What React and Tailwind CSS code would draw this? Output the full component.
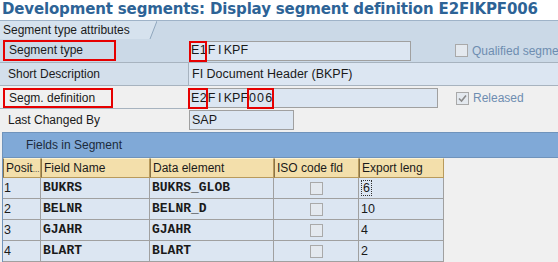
import React from "react";

const rows = [
  ["1", "BUKRS", "BUKRS_GLOB", "6"],
  ["2", "BELNR", "BELNR_D", "10"],
  ["3", "GJAHR", "GJAHR", "4"],
  ["4", "BLART", "BLART", "2"],
];

function Check({ checked }) {
  return (
    <div className="w-[13px] h-[13px] border border-[#a9a9a9] bg-[#e4e9ef] flex items-center justify-center shrink-0">
      {checked && (
        <svg width="11" height="11" viewBox="0 0 11 11">
          <path d="M2 5.5 L4.5 8 L9 2.5" stroke="#8a8a8a" strokeWidth="1.6" fill="none" />
        </svg>
      )}
    </div>
  );
}

function Chars({ text }) {
  return (
    <>
      {text.split("").map((c, i) => (
        <span key={i} className="inline-block w-[8.2px] text-center">{c}</span>
      ))}
    </>
  );
}

export default function App() {
  return (
    <div className="w-[558px] h-[262px] overflow-hidden bg-[#f0f0f0] text-[12px] text-[#1a1a1a]" style={{ fontFamily: "'Liberation Sans', Arial, sans-serif" }}>
      <div className="h-[20px] bg-white pl-[2px] text-[#2d6396] font-bold text-[15px] leading-[18px] whitespace-nowrap overflow-hidden" style={{ fontFamily: "'DejaVu Sans', sans-serif", letterSpacing: "-0.15px" }}>
        Development segments: Display segment definition E2FIKPF006
      </div>
      <div className="bg-[#cbd9e7] border-t border-[#9fb3c8]">
        <div className="flex h-[18px]">
          <div className="relative h-full w-[157px]">
            <svg className="absolute inset-0" width="157" height="18">
              <path d="M0 0 H157 L150 18 H0 Z" fill="#d6e2ee" />
              <path d="M157 0 L150 18" stroke="#8fa6bd" />
            </svg>
            <div className="relative pl-[3px] leading-[18px] whitespace-nowrap">Segment type attributes</div>
          </div>
        </div>
        {/* row 1 */}
        <div className="flex items-center h-[24px] border-b border-[#a7b3bf]">
          <div className="w-[189px] pl-[3px] shrink-0">
            <div className="w-[113px] h-[21px] border-2 border-[#e60000] pl-[4px] leading-[17px]">Segment type</div>
          </div>
          <div className="relative w-[222px] h-[20px] bg-[#dce6f2] border border-[#a0a0a0] flex items-center pl-[1px] text-[12.5px] shrink-0">
            <Chars text="E1FIKPF" />
            <span className="absolute -left-[1px] -top-[1px] w-[18px] h-[21px] border-2 border-[#e60000]" />
          </div>
          <div className="ml-[44px] flex items-center gap-[4px] text-[#6e8db0] whitespace-nowrap">
            <Check />
            <span>Qualified segme</span>
          </div>
        </div>
        {/* row 2 */}
        <div className="flex h-[23px] border-b border-[#a7b3bf]">
          <div className="w-[189px] pl-[8px] leading-[22px] border-r border-[#a7b3bf] bg-[#d3dfeb]">Short Description</div>
          <div className="flex-1 bg-[#dce6f2] pl-[3px] leading-[22px] text-[12.5px]">FI Document Header (BKPF)</div>
        </div>
      </div>
      <div className="h-[1px] bg-[#f0f0f0]" />
      {/* row 3 */}
      <div className="flex items-center h-[22px]">
        <div className="w-[189px] pl-[3px] h-full border-b border-[#a7b3bf] shrink-0">
          <div className="w-[110px] h-[20px] mt-[1px] border-2 border-[#e60000] pl-[4px] leading-[16px]">Segm. definition</div>
        </div>
        <div className="relative w-[249px] h-[20px] bg-[#dce6f2] border border-[#a0a0a0] flex items-center pl-[1px] text-[12.5px] shrink-0">
          <Chars text="E2FIKPF006" />
          <span className="absolute -left-[2px] -top-[1px] w-[20px] h-[21px] border-2 border-[#e60000]" />
          <span className="absolute left-[57px] -top-[1px] w-[27px] h-[21px] border-2 border-[#e60000]" />
        </div>
        <div className="ml-[18px] flex items-center gap-[4px] text-[#6e8db0]">
          <Check checked />
          <span>Released</span>
        </div>
      </div>
      {/* row 4 */}
      <div className="flex items-center h-[22px]">
        <div className="w-[189px] pl-[8px] leading-[20px]">Last Changed By</div>
        <div className="w-[105px] h-[20px] bg-[#dce6f2] border border-[#a0a0a0] pl-[2px] leading-[18px] text-[12.5px]">SAP</div>
      </div>
      {/* table */}
      <div className="mt-[1px] ml-[2px] border-t border-l border-[#6f93bb]">
        <div className="h-[24px] bg-[#80a9d7] pl-[23px] leading-[24px] text-[#1c2b3c]">Fields in Segment</div>
        <div className="flex h-[21px] border-t border-[#6f93bb]">
          {[
            ["Posit", "w-[38px]"],
            ["Field Name", "w-[109px]"],
            ["Data element", "w-[124px]"],
            ["ISO code fld", "w-[85px]"],
            ["Export leng", "w-[85px]"],
          ].map(([t, w]) => (
            <div key={t} className={`${w} h-full bg-[#f3dfab] border border-[#b89a5c] border-t-[#fff3d0] border-l-[#8a7448] pl-[2px] leading-[19px] whitespace-nowrap overflow-hidden`}>
              {t}
              {t === "Posit" && <span className="text-[8px]">...</span>}
            </div>
          ))}
        </div>
        {rows.map(([n, fn, de, len]) => (
          <div key={n} className="flex h-[21px]">
            <div className="w-[38px] bg-[#dce6f2] border-r border-b border-[#a0a0a0] pl-[1px] leading-[20px] text-[12.5px]">{n}</div>
            <div className="w-[109px] bg-[#dce6f2] border-r border-b border-[#a0a0a0] pl-[2px] leading-[20px] text-[13px]" style={{ fontFamily: "'Liberation Mono', monospace", fontWeight: 600 }}>{fn}</div>
            <div className="w-[124px] bg-[#dce6f2] border-r border-b border-[#a0a0a0] pl-[2px] leading-[20px] text-[13px]" style={{ fontFamily: "'Liberation Mono', monospace", fontWeight: 600 }}>{de}</div>
            <div className="w-[85px] bg-[#dce6f2] border-r border-b border-[#a0a0a0] flex items-center justify-center">
              <div className="w-[13px] h-[13px] border border-[#a9a9a9] bg-[#e4e9ef]" />
            </div>
            <div className="w-[85px] bg-[#dce6f2] border-r border-b border-[#a0a0a0] pl-[2px] leading-[20px] text-[12.5px]">
              {n === "1" ? <span className="border border-dotted border-[#333] px-[1px]">{len}</span> : len}
            </div>
          </div>
        ))}
      </div>
    </div>
  );
}
